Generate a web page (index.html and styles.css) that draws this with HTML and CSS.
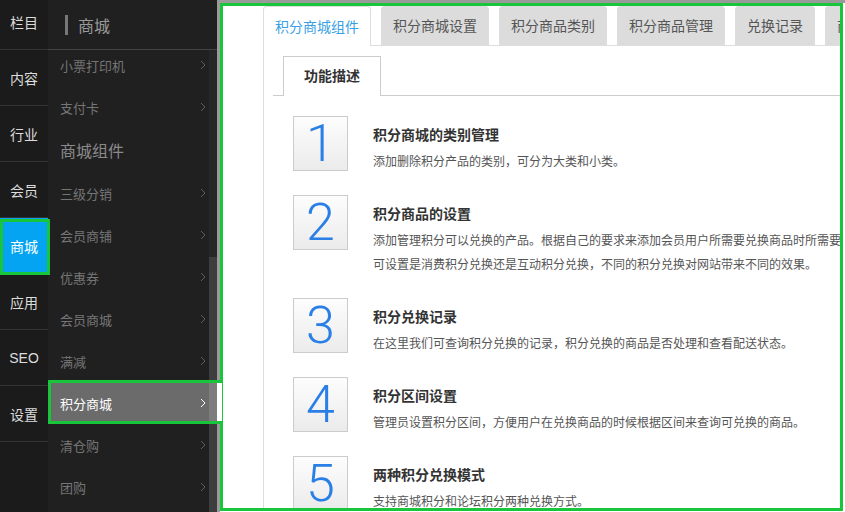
FILE: index.html
```html
<!DOCTYPE html>
<html lang="zh-CN">
<head>
    <meta charset="UTF-8">
    <title>积分商城</title>
    <link rel="stylesheet" href="styles.css">
</head>
<body>
<div class="app">
    <nav class="rail">
        <ul class="rail-list">
            <li>栏目</li>
            <li>内容</li>
            <li>行业</li>
            <li>会员</li>
            <li class="on">商城</li>
            <li>应用</li>
            <li>SEO</li>
            <li>设置</li>
        </ul>
    </nav>

    <aside class="subnav">
        <div class="subnav-head"><span class="bar"></span>商城</div>
        <ul class="menu">
            <li class="menu-item">小票打印机<svg class="chev" viewBox="0 0 6 10"><polyline points="1,1 5,5 1,9"/></svg></li>
            <li class="menu-item">支付卡<svg class="chev" viewBox="0 0 6 10"><polyline points="1,1 5,5 1,9"/></svg></li>
            <li class="menu-title">商城组件</li>
            <li class="menu-item">三级分销<svg class="chev" viewBox="0 0 6 10"><polyline points="1,1 5,5 1,9"/></svg></li>
            <li class="menu-item">会员商铺<svg class="chev" viewBox="0 0 6 10"><polyline points="1,1 5,5 1,9"/></svg></li>
            <li class="menu-item">优惠券<svg class="chev" viewBox="0 0 6 10"><polyline points="1,1 5,5 1,9"/></svg></li>
            <li class="menu-item">会员商城<svg class="chev" viewBox="0 0 6 10"><polyline points="1,1 5,5 1,9"/></svg></li>
            <li class="menu-item">满减<svg class="chev" viewBox="0 0 6 10"><polyline points="1,1 5,5 1,9"/></svg></li>
            <li class="menu-item on">积分商城<svg class="chev" viewBox="0 0 6 10"><polyline points="1,1 5,5 1,9"/></svg></li>
            <li class="menu-item">清仓购<svg class="chev" viewBox="0 0 6 10"><polyline points="1,1 5,5 1,9"/></svg></li>
            <li class="menu-item">团购<svg class="chev" viewBox="0 0 6 10"><polyline points="1,1 5,5 1,9"/></svg></li>
        </ul>
        <div class="scroll"><div class="thumb"></div></div>
    </aside>

    <main class="main">
        <div class="frame">
            <div class="tabbox">
                <ul class="tabs">
                    <li class="on">积分商城组件</li>
                    <li>积分商城设置</li>
                    <li>积分商品类别</li>
                    <li>积分商品管理</li>
                    <li>兑换记录</li>
                    <li>商品兑换</li>
                </ul>
                <div class="panel">
                    <div class="subtabs"><span class="subtab">功能描述</span></div>
                    <ul class="features">
                        <li class="feature">
                            <div class="num">1</div>
                            <div class="text">
                                <h3>积分商城的类别管理</h3>
                                <p>添加删除积分产品的类别，可分为大类和小类。</p>
                            </div>
                        </li>
                        <li class="feature">
                            <div class="num">2</div>
                            <div class="text">
                                <h3>积分商品的设置</h3>
                                <p>添加管理积分可以兑换的产品。根据自己的要求来添加会员用户所需要兑换商品时所需要的积分值，<br>可设置是消费积分兑换还是互动积分兑换，不同的积分兑换对网站带来不同的效果。</p>
                            </div>
                        </li>
                        <li class="feature">
                            <div class="num">3</div>
                            <div class="text">
                                <h3>积分兑换记录</h3>
                                <p>在这里我们可查询积分兑换的记录，积分兑换的商品是否处理和查看配送状态。</p>
                            </div>
                        </li>
                        <li class="feature">
                            <div class="num">4</div>
                            <div class="text">
                                <h3>积分区间设置</h3>
                                <p>管理员设置积分区间，方便用户在兑换商品的时候根据区间来查询可兑换的商品。</p>
                            </div>
                        </li>
                        <li class="feature">
                            <div class="num">5</div>
                            <div class="text">
                                <h3>两种积分兑换模式</h3>
                                <p>支持商城积分和论坛积分两种兑换方式。</p>
                            </div>
                        </li>
                    </ul>
                </div>
            </div>
        </div>
    </main>
</div>
</body>
</html>
```

FILE: styles.css
```css
body {
    margin: 0;
    width: 845px;
    height: 512px;
    overflow: hidden;
    background: #1b1b1b;
    font-family: "Liberation Sans", "Noto Sans CJK SC", sans-serif;
}

ul {
    list-style: none;
    margin: 0;
    padding: 0;
}

.app {
    display: flex;
    height: 512px;
}

/* colonna principale a sinistra */
.rail {
    width: 48px;
    flex: none;
    background: #1b1b1b;
    position: relative;
    z-index: 4;
}

.rail-list {
    margin-top: -6px;
}

.rail-list li {
    height: 55px;
    border-bottom: 1px solid #333;
    display: flex;
    align-items: center;
    justify-content: center;
    color: #ddd;
    font-size: 14px;
    position: relative;
}

.rail-list li.on {
    background: #04a4f2;
    color: #fff;
}

.rail-list li.on::after {
    content: "";
    position: absolute;
    left: 0;
    top: 1px;
    width: 50px;
    height: 56px;
    border: 3px solid #19c53a;
    box-sizing: border-box;
}

/* sottomenu */
.subnav {
    width: 169px;
    flex: none;
    background: #202020;
    position: relative;
    z-index: 3;
}

.subnav-head {
    position: relative;
    z-index: 2;
    height: 49px;
    background: #202020;
    border-bottom: 1px solid #444;
    display: flex;
    align-items: center;
    padding-left: 17px;
    color: #999;
    font-size: 16px;
}

.bar {
    width: 3px;
    height: 20px;
    background: #777;
    margin-right: 10px;
}

.menu {
    margin-top: -6px;
}

.menu-item {
    height: 42px;
    display: flex;
    align-items: center;
    justify-content: space-between;
    padding: 0 11px 0 12px;
    color: #757575;
    font-size: 13px;
    position: relative;
}

.menu-title {
    height: 44px;
    display: flex;
    align-items: center;
    padding-left: 12px;
    color: #8a8a8a;
    font-size: 16px;
}

.chev {
    width: 6px;
    height: 10px;
    fill: none;
    stroke: #5e5e5e;
    stroke-width: 1;
}

.menu-item.on {
    background: #6b6b6b;
    color: #fff;
}

.menu-item.on .chev {
    stroke: #fff;
}

.menu-item.on::before {
    content: "";
    position: absolute;
    z-index: 2;
    left: 0;
    right: -5px;
    top: -2px;
    bottom: 0;
    border: 3px solid #19c53a;
    border-right: 0;
    background: linear-gradient(to left, #fff 5px, transparent 5px);
}

.scroll {
    position: absolute;
    z-index: 1;
    left: 161px;
    width: 8px;
    top: 50px;
    bottom: 0;
    background: rgba(255, 255, 255, 0.03);
}

.thumb {
    position: absolute;
    top: 207px;
    left: 0;
    right: 0;
    bottom: 0;
    background: rgba(255, 255, 255, 0.1);
}

/* area contenuto */
.main {
    flex: 1;
    background: #fff;
    border-top: 3px solid #9a9a9a;
    border-left: 3px solid #9a9a9a;
}

.frame {
    width: 623px;
    height: 508px;
    box-sizing: border-box;
    border: 3px solid #19c53a;
    overflow: hidden;
}

.tabbox {
    margin-left: 40px;
}

.tabs {
    display: flex;
    height: 39px;
    border-bottom: 1px solid #ddd;
    white-space: nowrap;
}

.tabs li {
    flex: none;
    height: 39px;
    line-height: 41px;
    padding: 0 12px;
    margin-right: 10px;
    background: #dcdcdc;
    border-radius: 4px 4px 0 0;
    color: #555;
    font-size: 14px;
}

.tabs li.on {
    height: 40px;
    padding: 0 11px;
    background: #fff;
    border: 1px solid #ddd;
    border-bottom: 0;
    box-sizing: border-box;
    margin-bottom: -1px;
    color: #3a9fe6;
    line-height: 40px;
}

.panel {
    border-left: 1px solid #ddd;
    padding: 10px 0 0 9px;
    height: 500px;
}

.subtabs {
    display: flex;
    height: 39px;
    padding-left: 10px;
    border-bottom: 1px solid #ccc;
}

.subtab {
    height: 40px;
    box-sizing: border-box;
    padding: 0 20px;
    border: 1px solid #ccc;
    border-bottom: 0;
    background: #fff;
    line-height: 38px;
    font-size: 14px;
    font-weight: bold;
    color: #333;
}

.features {
    margin: 20px 0 0 20px;
}

.feature {
    display: flex;
    margin-bottom: 21px;
}

.num {
    flex: none;
    width: 55px;
    height: 55px;
    box-sizing: border-box;
    border: 1px solid #ccc;
    background: linear-gradient(#fdfdfd, #ebebeb);
    display: flex;
    align-items: center;
    justify-content: center;
    font-family: Roboto, "Liberation Sans", sans-serif;
    font-weight: 300;
    font-size: 52px;
    line-height: 1;
    color: #2a7fe6;
}

.text {
    margin-left: 25px;
    padding-top: 8px;
}

.text h3 {
    margin: 0;
    font-size: 14px;
    line-height: 22px;
    color: #333;
}

.text p {
    margin: 4px 0 0;
    font-size: 12px;
    line-height: 24px;
    color: #555;
    white-space: nowrap;
}
```
